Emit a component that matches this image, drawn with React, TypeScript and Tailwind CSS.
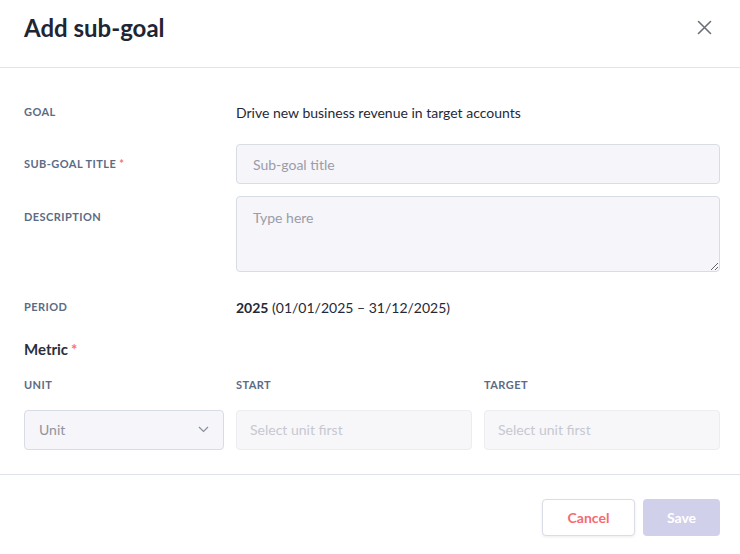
import React from "react";

const label = "text-[11px] font-bold uppercase tracking-[0.04em] text-[#5b6b86]";

function Req() {
  return <span className="ml-[3px] text-[#f87171]">*</span>;
}

export default function App() {
  return (
    <div className="w-[740px] h-[554px] bg-white font-['Lato',sans-serif] text-[#1f2937] flex flex-col">
      <div className="h-[68px] border-b border-[#e2e4e9] pl-6 pr-5 flex items-start justify-between">
        <h1 className="mt-[14px] text-[24px] leading-[28px] font-bold text-[#1e2533]">Add sub-goal</h1>
        <button className="mt-[20px] mr-2 text-[#6b6f78]">
          <svg width="15" height="15" viewBox="0 0 15 15" fill="none" stroke="currentColor" strokeWidth="1.6" strokeLinecap="round">
            <path d="M1.5 1.5l12 12M13.5 1.5l-12 12" />
          </svg>
        </button>
      </div>

      <div className="pl-6 pr-5 flex-1 flex flex-col">
        <div className="mt-[34px] grid grid-cols-[200px_1fr] gap-x-3 items-center h-5">
          <div className={label}>Goal</div>
          <div className="text-[14px] text-[#1f2937]">Drive new business revenue in target accounts</div>
        </div>

        <div className="mt-[22px] grid grid-cols-[200px_1fr] gap-x-3 items-center">
          <div className={label}>
            Sub-goal title
            <Req />
          </div>
          <input
            placeholder="Sub-goal title"
            className="h-10 rounded-[4px] border border-[#d8dce5] bg-[#f5f5fa] px-4 text-[14px] placeholder:text-[#9a9ca8] outline-none"
          />
        </div>

        <div className="mt-3 grid grid-cols-[200px_1fr] gap-x-3 items-start">
          <div className={`${label} pt-[13px]`}>Description</div>
          <textarea
            placeholder="Type here"
            className="h-[76px] rounded-[4px] border border-[#d8dce5] bg-[#f5f5fa] px-4 py-[10px] text-[14px] placeholder:text-[#9a9ca8] outline-none"
          />
        </div>

        <div className="mt-[25px] grid grid-cols-[200px_1fr] gap-x-3 items-center h-5">
          <div className={label}>Period</div>
          <div className="text-[14px] text-[#1f2937]">
            <span className="font-bold">2025</span> (01/01/2025 – 31/12/2025)
          </div>
        </div>

        <div className="mt-[21px] text-[15px] leading-[22px] font-bold text-[#2a303b]">
          Metric
          <Req />
        </div>

        <div className="mt-[17px] grid grid-cols-[200px_1fr_1fr] gap-x-3">
          <div className={label}>Unit</div>
          <div className={label}>Start</div>
          <div className={label}>Target</div>
          <div className="mt-4 h-10 rounded-[4px] border border-[#d8dce5] bg-[#f5f5fa] pl-[14px] pr-[14px] flex items-center justify-between">
            <span className="text-[14px] text-[#8f93a0]">Unit</span>
            <svg width="11" height="7" viewBox="0 0 11 7" fill="none" stroke="#8a8e99" strokeWidth="1.2">
              <path d="M1 1l4.5 4.5L10 1" />
            </svg>
          </div>
          <input
            disabled
            placeholder="Select unit first"
            className="mt-4 h-10 rounded-[4px] border border-[#ececf1] bg-[#f7f7fa] px-[13px] text-[14px] placeholder:text-[#c6c8d0] outline-none"
          />
          <input
            disabled
            placeholder="Select unit first"
            className="mt-4 h-10 rounded-[4px] border border-[#ececf1] bg-[#f7f7fa] px-[13px] text-[14px] placeholder:text-[#c6c8d0] outline-none"
          />
        </div>
      </div>

      <div className="h-[80px] border-t border-[#dfe2e8] px-5 flex items-start justify-end gap-2">
        <button className="mt-[24px] h-[37px] w-[93px] rounded-[4px] border border-[#dadde5] bg-white text-[14px] font-bold text-[#f56b6f] shadow-[0_1px_3px_rgba(0,0,0,0.08)]">
          Cancel
        </button>
        <button className="mt-[24px] h-[37px] w-[77px] rounded-[4px] bg-[#d1d0ea] text-[14px] font-bold text-white">
          Save
        </button>
      </div>
    </div>
  );
}
